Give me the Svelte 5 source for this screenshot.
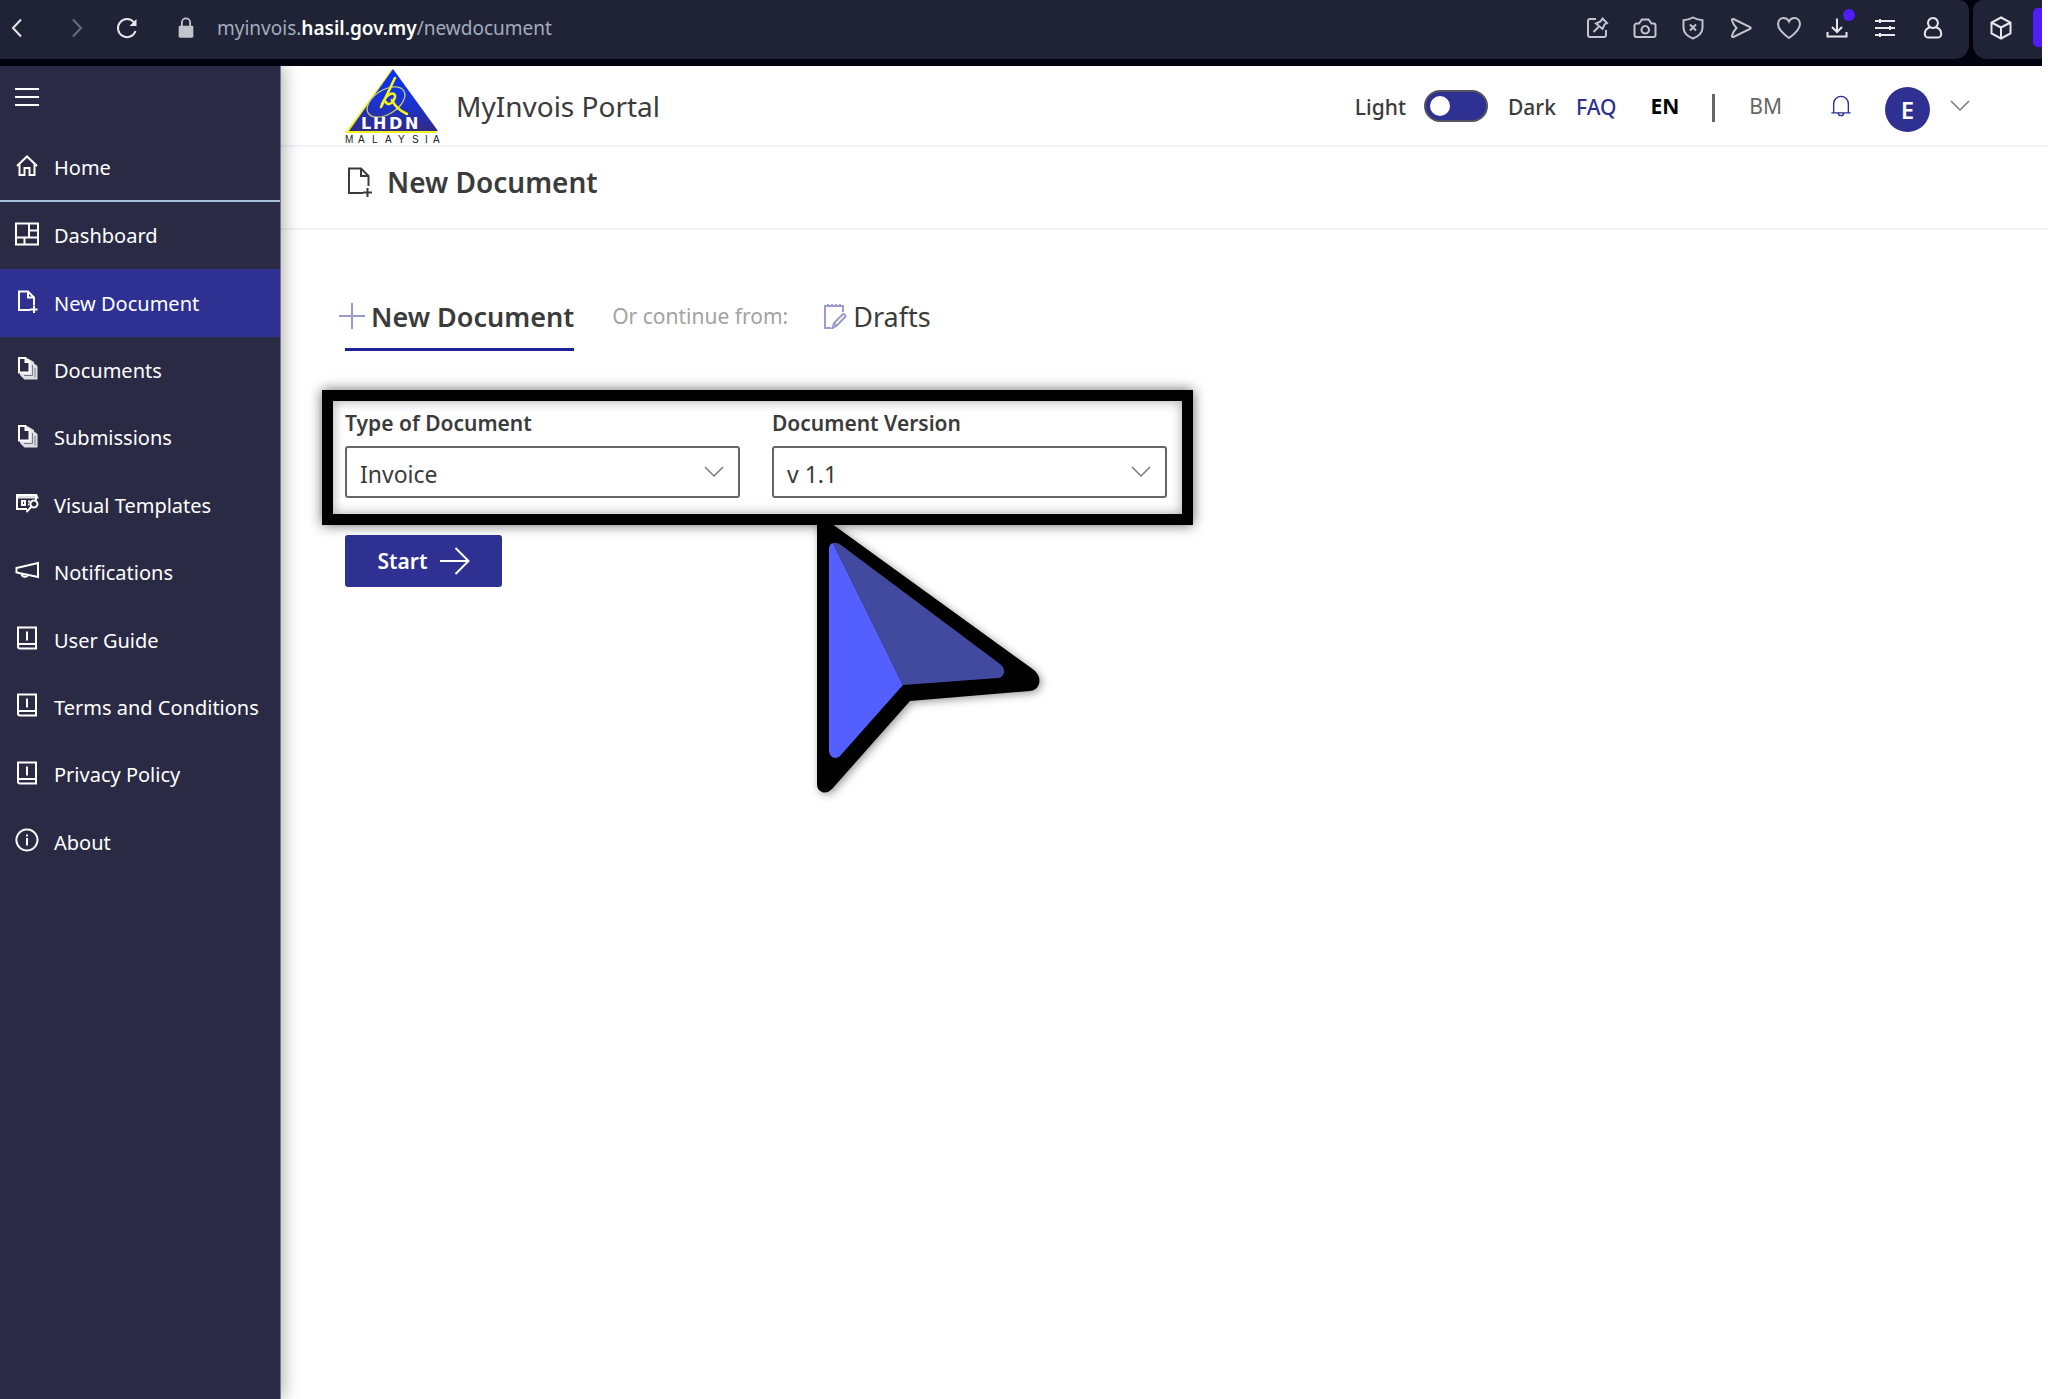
<script>
    let docType = 'Invoice';
    let docVersion = 'v 1.1';
    let dark = false;

    const menu = [
        { label: 'Dashboard', icon: 'dashboard' },
        { label: 'New Document', icon: 'newdoc' },
        { label: 'Documents', icon: 'docs' },
        { label: 'Submissions', icon: 'docs' },
        { label: 'Visual Templates', icon: 'templates' },
        { label: 'Notifications', icon: 'megaphone' },
        { label: 'User Guide', icon: 'book' },
        { label: 'Terms and Conditions', icon: 'book' },
        { label: 'Privacy Policy', icon: 'book' },
        { label: 'About', icon: 'about' }
    ];
    let current = 'New Document';

    // 24x24 outlines for the side menu
    const menuIcons = {
        home: 'M2 12 L12 2.5 L22 12 M4.5 10.5 V21 H9.5 V14 H14.5 V21 H19.5 V10.5',
        dashboard: 'M1 1.5 H23 V22.5 H1 Z M14 1.5 V15.5 M1 15.5 H23 M14 8.5 H23 M9.5 15.5 V22.5',
        newdoc: 'M15 21 H4 V2.5 H13 L19 8.5 V16 M13 2.5 V8.5 H19 M19 16.5 V24 M15 20.5 H22.5',
        docs: 'M4 2 H10.5 L14.5 6 V16.5 H4 Z M10.5 2 V6 H14.5',
        templates: 'M2 4 H21 V9 M2 4 V18 H12 M7 10 H10 V14 H7 Z M13 10.5 H15 M13 13.5 H14 M19 9.5 A3.5 3.5 0 1 1 18.9 9.5 M16.5 15.5 L11.5 21',
        megaphone: 'M1.5 9 L23 4 V18 L1.5 13.5 Z M6.5 14.8 A3.5 3.5 0 0 0 13 16',
        book: 'M3 1.5 H21 V22.5 H5 A2 2 0 0 1 3 20.5 Z M3 19 A2 2 0 0 1 5 18 H21 M12 5.5 V14.5',
        about: 'M12 1.5 A10.5 10.5 0 1 1 11.9 1.5 M12 6.5 V8.5 M12 10 V17.5'
    };

    // solid parts that go under some of the outlines
    const menuFills = {
        docs: 'M13 2.5 L19 6 V7.5 L22.5 10 V23.5 H9.5 L5 19 V16 H14.5 Z',
        templates: 'M1 3 H22 L24 7.5 H1 Z'
    };

    // toolbar of the browser, 24x24 as well
    const toolIcons = [
        { name: 'Pin', d: 'M11 3 H5 A2 2 0 0 0 3 5 V19 A2 2 0 0 0 5 21 H19 A2 2 0 0 0 21 19 V14 M17.5 2.5 L22 7 L19.5 8.5 L17.5 13 L11 7.5 L15.5 5.5 Z M13.5 11 L8.5 16' },
        { name: 'Snapshot', d: 'M3.5 7.5 H6 L9 3.5 H15.5 L18.5 7.5 H20.5 A2 2 0 0 1 22.5 9.5 V19 A2 2 0 0 1 20.5 21 H3.5 A2 2 0 0 1 1.5 19 V9.5 A2 2 0 0 1 3.5 7.5 Z M12.3 10 A3.8 3.8 0 1 1 12.2 10' },
        { name: 'Ad blocker', d: 'M12 1.5 Q16.5 4 21.5 4.2 V12 Q21 19 12 22.5 Q3 19 2.5 12 V4.2 Q7.5 4 12 1.5 Z M9 8.5 L15 14.5 M15 8.5 L9 14.5' },
        { name: 'Flow', d: 'M4.5 3 L21 11 Q22.5 12 21 13 L4.5 21 Q2.5 21.5 3 19.5 Q4.5 15 7.5 12 Q4.5 9 3 4.5 Q2.5 2.5 4.5 3 Z' },
        { name: 'Favourite', d: 'M12 22 C5 17 1 12.5 1 8 C1 4.5 3.5 2 6.5 2 C9 2 11 3.5 12 5.5 C13 3.5 15 2 17.5 2 C20.5 2 23 4.5 23 8 C23 12.5 19 17 12 22 Z' },
        { name: 'Downloads', d: 'M12 2.5 V15.5 M7 11 L12 16 L17 11 M2.5 16 V20.5 H21.5 V16', dot: true, bright: true },
        { name: 'Easy setup', d: 'M2 5 H22 M2 12 H22 M2 19 H22 M7 3 V7 M17 10 V14 M7 17 V21', bright: true },
        { name: 'Profile', d: 'M12 2 A5 5 0 1 1 11.9 2 M8.5 11.5 C2.5 13.5 2.5 21.5 7 21.5 H17 C21.5 21.5 21.5 13.5 15.5 11.5', bright: true }
    ];
</script>

<div class="browser">
    <div class="panel address">
        <button class="tool bright" aria-label="Back"><svg viewBox="0 0 24 24"><path d="M16 3.5 L8 12 L16 20.5" /></svg></button>
        <button class="tool dim" aria-label="Forward"><svg viewBox="0 0 24 24"><path d="M8 3.5 L16 12 L8 20.5" /></svg></button>
        <button class="tool bright" aria-label="Reload"><svg viewBox="0 0 24 24"><path d="M20.5 15 A9 9 0 1 1 19 6.5" /><path class="solid" d="M21.5 3 V10 H14.5 Z" /></svg></button>
        <svg class="lock" viewBox="0 0 24 24"><path d="M7.5 10 V6 A4.5 4.5 0 0 1 16.5 6 V10" /><rect class="solid" x="4" y="9.5" width="16" height="13" rx="1.5" /></svg>
        <span class="url">myinvois.<b>hasil.gov.my</b>/newdocument</span>
        <div class="tools">
            {#each toolIcons as icon}
                <button class="tool" class:bright={icon.bright} aria-label={icon.name}>
                    <svg viewBox="0 0 24 24"><path d={icon.d} /></svg>
                    {#if icon.dot}<span class="dot"></span>{/if}
                </button>
            {/each}
        </div>
    </div>
    <div class="panel extension">
        <button class="tool bright" aria-label="Extensions"><svg viewBox="0 0 24 24"><path d="M12 1.5 L21.5 6.5 V17.5 L12 22.5 L2.5 17.5 V6.5 Z M2.5 6.5 L12 11.5 L21.5 6.5 M12 11.5 V22.5" /></svg></button>
        <span class="strip"></span>
    </div>
</div>

<div class="portal">
    <nav class="sidebar">
        <button class="burger" aria-label="Menu"><svg viewBox="0 0 24 24"><path d="M0 4 H24 M0 12 H24 M0 20 H24" /></svg></button>
        <a class="item home" href="#home"><svg viewBox="0 0 24 24"><path d={menuIcons.home} /></svg>Home</a>
        <div class="menu">
            {#each menu as item}
                <a class="item" class:active={item.label === current} href="#{item.icon}">
                    <svg viewBox="0 0 24 24">
                        {#if menuFills[item.icon]}<path class="solid soft" d={menuFills[item.icon]} />{/if}
                        {#if item.icon === 'docs'}
                            <path class="fold" d="M17.5 9 V19.500 H9 M20 12 V21.500" />
                            <path class="paper" d={menuIcons.docs} />
                        {:else}
                            <path d={menuIcons[item.icon]} />
                        {/if}
                    </svg>{item.label}
                </a>
            {/each}
        </div>
    </nav>

    <main>
        <header>
            <svg class="logo" viewBox="0 0 96 76">
                <defs>
                    <linearGradient id="sky" x1="0" y1="0" x2="0" y2="1">
                        <stop offset="0" stop-color="#0433f5" />
                        <stop offset="0.5" stop-color="#1a33d8" />
                        <stop offset="1" stop-color="#2f2c86" />
                    </linearGradient>
                </defs>
                <path d="M47 1 L0 65 H92 Z" fill="#f4f11c" />
                <path d="M48 1 L4 63 H93 Z" fill="url(#sky)" />
                <ellipse cx="41" cy="34" rx="21" ry="12" transform="rotate(-32 41 34)" fill="none" stroke="#c9cf6a" stroke-width="1.3" />
                <path d="M50 10 C46 18 42 27 36 39 M37 36 C43 23 51 24 50 29 C48 36 42 38 41 34 M47 32 Q51 41 62 46" fill="none" stroke="#f8f41a" stroke-width="2.6" stroke-linecap="round" />
                <text y="61" class="lhdn" x="16 28 44 60">LHDN</text>
                <text y="75" class="malaysia" x="0 13 27 40 53 67 80 88">MALAYSIA</text>
            </svg>
            <span class="brand">MyInvois Portal</span>
            <div class="account">
                <label class="mode" for="theme">Light</label>
                <input id="theme" class="toggle" type="checkbox" role="switch" bind:checked={dark} />
                <label class="mode" for="theme">Dark</label>
                <a class="faq" href="#faq">FAQ</a>
                <a class="en" href="#en">EN</a>
                <span class="bar"></span>
                <a class="bm" href="#bm">BM</a>
                <button class="bell" aria-label="Notifications"><svg viewBox="0 0 24 24"><path d="M1.5 19.5 H22.5 M4 19.5 V9.5 A8 8 0 0 1 20 9.5 V19.5 M9 19.5 A3 3 0 0 0 15 19.5" /></svg></button>
                <button class="avatar">E</button>
                <svg class="chevron" viewBox="0 0 20 12"><path d="M1 1 L10 10 L19 1" /></svg>
            </div>
        </header>

        <div class="title">
            <svg viewBox="0 0 24 30"><path d="M16 26 H2 V1.5 H14 L21.5 9 V19 M14 1.5 V9 H21.5 M20.5 21 V30 M16 25.5 H25" /></svg>
            <h1>New Document</h1>
        </div>

        <section>
            <div class="tabs">
                <a class="tab selected" href="#new"><svg class="plus" viewBox="0 0 26 26"><path d="M13 0 V26 M0 13 H26" /></svg>New Document</a>
                <span class="hint">Or continue from:</span>
                <a class="tab" href="#drafts"><svg viewBox="0 0 24 26"><path d="M8 25 H2 V3 H20 V9 M5 1 V4 M9 1 V4 M13 1 V4 M17 1 V4 M9.5 25 L11 20 L20 11 Q22.5 11 22.5 13.5 L13.5 23 Z M11 20 L13.5 23" /></svg>Drafts</a>
            </div>

            <div class="choices">
                <div class="field">
                    <label for="docType">Type of Document</label>
                    <div class="select">
                        <select id="docType" bind:value={docType}>
                            <option>Invoice</option>
                            <option>Credit Note</option>
                            <option>Debit Note</option>
                        </select>
                        <svg class="chevron" viewBox="0 0 20 12"><path d="M1 1 L10 10 L19 1" /></svg>
                    </div>
                </div>
                <div class="field">
                    <label for="docVersion">Document Version</label>
                    <div class="select">
                        <select id="docVersion" bind:value={docVersion}>
                            <option>v 1.0</option>
                            <option>v 1.1</option>
                        </select>
                        <svg class="chevron" viewBox="0 0 20 12"><path d="M1 1 L10 10 L19 1" /></svg>
                    </div>
                </div>
                <svg class="pointer" viewBox="0 0 260 300">
                    <path d="M20 12 L31 12 L237 161 Q244 167 242 175 Q240 181 233 182 L113 192 L35 280 Q30 285 25 283 Q20 281 20 275 Z" fill="#000" />
                    <path d="M36 34 L106 176 L43 247 Q38 251 34 247 Q32 245 32 242 V40 Q32 35 36 34 Z" fill="#5360ff" />
                    <path d="M36 34 Q40 33 44 36 L203 155 Q208 159 207 164 Q205 169 201 169 L106 176 Z" fill="#424a9f" />
                </svg>
            </div>

            <button class="start">Start<svg viewBox="0 0 30 28"><path d="M0 14 H28 M15.5 1 L28.5 14 L15.5 27" /></svg></button>
        </section>
    </main>
</div>

<style>
    :global(body) {
        background: #fff;
        font-family: 'Noto Sans', 'Open Sans', sans-serif;
        color: #3b3b3b;
    }

    :global(#app) {
        display: flex;
        flex-direction: column;
        min-height: 100vh;
    }

    * {
        box-sizing: border-box;
    }

    a {
        color: inherit;
        text-decoration: none;
    }

    button {
        padding: 0;
        border: 0;
        background: none;
        color: inherit;
        font-family: inherit;
        cursor: pointer;
    }

    svg {
        flex: none;
        fill: none;
        stroke: currentColor;
        stroke-width: 2;
    }

    /* browser bar */
    .browser {
        display: flex;
        gap: 4px;
        height: 66px;
        padding: 0 6px 7px 0;
        background: linear-gradient(90deg, #02030f calc(100% - 6px), #fff 0);
    }

    .panel {
        display: flex;
        align-items: center;
        background: #1f2335;
        color: #c3c5cc;
    }

    .address {
        flex: 1;
        border-radius: 0 10px 14px 0;
        padding: 0 24px 4px 5px;
    }

    .extension {
        width: 69px;
        padding: 0 0 4px 16px;
        border-radius: 10px 0 0 14px;
        justify-content: space-between;
    }

    .tool {
        position: relative;
        width: 24px;
        height: 24px;
    }

    .tool svg {
        width: 24px;
        height: 24px;
        display: block;
    }

    .bright {
        color: #e6e7ea;
    }

    .dim {
        margin: 0 26px 0 36px;
        color: #6b6e7c;
    }

    .lock {
        width: 22px;
        height: 24px;
        margin: 0 20px 0 36px;
    }

    .solid {
        fill: currentColor;
        stroke: none;
    }

    .url {
        font-size: 19px;
        color: #a3acbd;
    }

    .url b {
        font-weight: 600;
        color: #fff;
    }

    .tools {
        display: flex;
        gap: 24px;
        margin-left: auto;
    }

    .dot {
        position: absolute;
        top: -7px;
        right: -6px;
        width: 12px;
        height: 12px;
        border-radius: 50%;
        background: #4f1dff;
    }

    .strip {
        width: 9px;
        height: 39px;
        border-radius: 5px 0 0 5px;
        background: #4f1dff;
    }

    /* page */
    .portal {
        flex: 1;
        display: flex;
    }

    .sidebar {
        width: 281px;
        background: #2b2a45;
        color: #fff;
        border-right: 1px solid #77768a;
        box-shadow: 0 0 18px rgba(0, 0, 0, 0.4);
        clip-path: inset(0 -30px 0 0);
    }

    .burger {
        display: block;
        margin: 19px 15px 0;
        height: 24px;
    }

    .burger svg,
    .item svg {
        width: 24px;
        height: 24px;
    }

    .item {
        display: flex;
        align-items: center;
        gap: 15px;
        padding-left: 15px;
        font-size: 20px;
    }

    .item svg {
        margin-bottom: 4px;
    }

    .soft {
        opacity: 0.85;
    }

    .paper {
        fill: #2b2a45;
    }

    .fold {
        stroke: #77768a;
        stroke-width: 1;
    }

    .home {
        height: 93px;
        padding-top: 26px;
        border-bottom: 2px solid #a9bfdc;
    }

    .menu {
        display: grid;
        grid-template-rows: repeat(10, 1fr);
        height: 674px;
    }

    .active {
        background: #2e3192;
    }

    main {
        flex: 1;
    }

    header {
        display: flex;
        align-items: center;
        height: 81px;
        padding: 0 78px 0 64px;
        border-bottom: 2px solid #f0f3f9;
    }

    .logo {
        width: 96px;
        height: 76px;
        stroke: none;
    }

    .lhdn {
        font: bold 16px 'DejaVu Sans', sans-serif;
        fill: #fff;
    }

    .malaysia {
        font: 10px 'Liberation Sans', sans-serif;
        fill: #222;
    }

    .brand {
        margin-left: 15px;
        font-size: 28px;
    }

    .account {
        display: flex;
        align-items: center;
        margin-left: auto;
        font-size: 21px;
    }

    .mode,
    .faq {
        padding-top: 2px;
        font-weight: 500;
    }

    .toggle {
        appearance: none;
        width: 64px;
        height: 32px;
        margin: 0 20px 0 18px;
        padding: 4px;
        border: 2px solid #55555f;
        border-radius: 16px;
        background: #2e3192;
    }

    .toggle::before {
        content: '';
        display: block;
        width: 20px;
        height: 20px;
        border-radius: 50%;
        background: #fff;
    }

    .toggle:checked::before {
        margin-left: auto;
    }

    .faq {
        margin-left: 20px;
        color: #2e3192;
    }

    .en {
        margin: 0 33px 0 34px;
        color: #000;
        font-weight: 700;
    }

    .bar {
        width: 3px;
        height: 28px;
        margin-top: 4px;
        background: #666;
    }

    .bm {
        margin: 0 48px 0 34px;
        color: #666;
    }

    .bell {
        color: #2e3192;
        height: 24px;
    }

    .bell svg {
        width: 22px;
        height: 24px;
        stroke-width: 1.5;
    }

    .avatar {
        width: 45px;
        height: 45px;
        margin: 8px 20px 0 33px;
        border-radius: 50%;
        background: #2e3192;
        color: #fff;
        font-size: 24px;
        font-weight: 600;
    }

    .chevron {
        width: 20px;
        height: 12px;
        stroke: #7a7a7a;
        stroke-width: 1.5;
    }

    .title {
        display: flex;
        align-items: center;
        gap: 16px;
        height: 83px;
        padding: 0 0 12px 66px;
        border-bottom: 2px solid #f3f3f3;
    }

    .title svg {
        width: 24px;
        height: 30px;
        overflow: visible;
    }

    h1 {
        margin: 0;
        font-size: 28px;
        font-weight: 600;
    }

    section {
        padding: 62px 41px;
    }

    .tabs {
        display: flex;
        align-items: flex-start;
        padding-left: 23px;
    }

    .tab {
        display: flex;
        align-items: center;
        gap: 6px;
        height: 48px;
        font-size: 27px;
    }

    .tab svg {
        width: 24px;
        height: 26px;
        stroke: #9a9cd0;
    }

    .selected {
        height: 59px;
        padding-bottom: 8px;
        font-weight: 600;
        border-bottom: 3px solid #1d2299;
    }

    .tab .plus {
        width: 26px;
        margin-left: -6px;
    }

    .hint {
        margin: 0 35px 0 38px;
        font-size: 21px;
        line-height: 48px;
        color: #a3a3a3;
    }

    /* highlighted choices */
    .choices {
        position: relative;
        display: flex;
        gap: 32px;
        width: 871px;
        max-width: 100%;
        height: 135px;
        margin-top: 39px;
        padding: 7px 15px 15px 12px;
        border: 11px solid #000;
        box-shadow: 0 0 12px rgba(0, 0, 0, 0.6), inset 0 0 12px rgba(0, 0, 0, 0.35);
    }

    .field {
        flex: 1;
        display: flex;
        flex-direction: column;
        gap: 8px;
    }

    .field label {
        font-size: 21px;
        line-height: 30px;
        font-weight: 600;
    }

    .select {
        display: grid;
        align-items: center;
    }

    .select > * {
        grid-area: 1 / 1;
    }

    select {
        appearance: none;
        height: 52px;
        padding: 4px 13px 0;
        border: 2px solid #666;
        border-radius: 3px;
        background: #fff;
        color: #3b3b3b;
        font-family: inherit;
        font-size: 23px;
    }

    .select .chevron {
        justify-self: end;
        margin-right: 16px;
        pointer-events: none;
    }

    .pointer {
        position: absolute;
        top: 108px;
        left: 464px;
        width: 260px;
        height: 300px;
        stroke: none;
        filter: drop-shadow(2px 2px 4px rgba(0, 0, 0, 0.4));
        pointer-events: none;
    }

    .start {
        display: flex;
        align-items: center;
        justify-content: center;
        gap: 12px;
        width: 157px;
        height: 52px;
        margin: 10px 0 0 23px;
        border-radius: 3px;
        background: #2e3192;
        color: #fff;
        font-size: 21px;
        font-weight: 600;
    }

    .start svg {
        width: 30px;
        height: 28px;
    }
</style>
